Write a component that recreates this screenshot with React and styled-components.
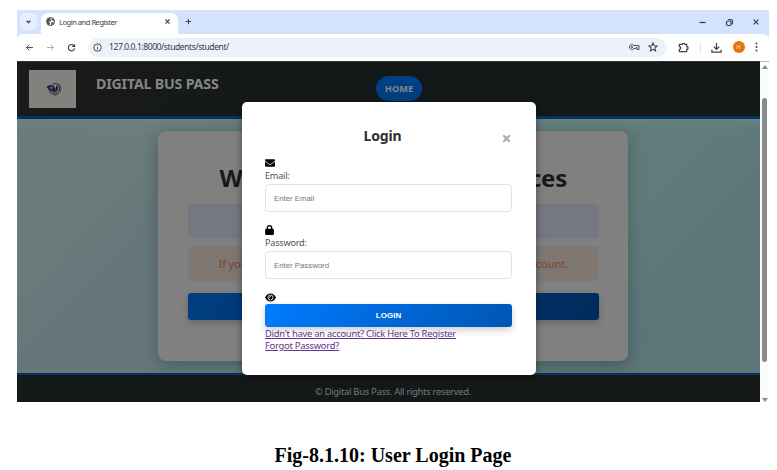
import React from "react";
import styled, { createGlobalStyle } from "styled-components";

const Global = createGlobalStyle`
  *{box-sizing:border-box}
  body{margin:0;background:#fff}
`;
const ui = `"Noto Sans","Open Sans",sans-serif`;

const Page = styled.main`
  width:777px;height:470px;padding:10px 8px 0 17px;background:#fff;font-family:${ui};overflow:hidden;
`;
const Browser = styled.section`
  width:752px;height:392px;display:flex;flex-direction:column;background:#fff;
`;
const TabStrip = styled.div`
  height:30px;flex:none;background:#d3e2fd;display:flex;align-items:flex-start;padding:3px 0 0 3px;
`;
const TabMenu = styled.div`
  width:17px;height:17px;border-radius:5px;background:#e7effd;display:grid;place-items:center;
`;
const Tab = styled.div`
  width:137px;height:27px;margin:0 0 0 4px;background:#fff;border-radius:7px 7px 0 0;
  display:flex;align-items:center;padding:0 7px 10px 5px;
`;
const TabTitle = styled.span`
  flex:1;margin-left:4px;font-size:7.5px;line-height:12px;color:#3b3d40;letter-spacing:-.46px;white-space:nowrap;
`;
const NewTab = styled.div`margin:5px 0 0 7px;height:9px;display:flex;`;
const WindowButtons = styled.div`
  margin:3px 9px 0 auto;display:flex;gap:18px;align-items:center;height:12px;
`;
const Toolbar = styled.div`
  height:27px;flex:none;margin-top:-6px;background:#fff;border-radius:6px 6px 0 0;display:flex;align-items:center;padding:0 11px 1px 8px;
`;
const Nav = styled.div`display:flex;gap:12px;width:63px;`;
const Address = styled.div`
  width:579px;height:19px;border-radius:10px;background:#edf2fa;display:flex;align-items:center;padding:0 9px 0 5px;
`;
const Url = styled.span`
  flex:1;margin-left:7px;font-size:8.6px;line-height:14px;color:#383a3d;letter-spacing:-.45px;white-space:nowrap;
`;
const AddressIcons = styled.div`display:flex;gap:8px;align-items:center;`;
const Actions = styled.div`margin-left:11px;display:flex;align-items:center;flex:1;justify-content:space-between;`;
const Divider = styled.i`width:1px;height:9px;background:#d3e0f8;`;
const Avatar = styled.span`
  width:12px;height:12px;border-radius:50%;background:#e8710a;color:#ffe3cb;display:grid;place-items:center;font:6px/1 Roboto,sans-serif;
`;
const Viewport = styled.div`
  height:341px;display:flex;position:relative;
`;
const Site = styled.div`width:743px;display:flex;flex-direction:column;`;
const Header = styled.header`
  height:58px;flex:none;display:flex;align-items:flex-start;padding-left:12px;
  background:linear-gradient(135deg,#1a1a1a,#131819 45%);border-top:1px solid #303334;border-bottom:3px solid #07325f;
`;
const Logo = styled.div`width:47px;height:38px;margin-top:8px;background:#82817d;display:grid;place-items:center;padding-left:3px;`;
const Brand = styled.h1`
  margin:12px 0 0 20px;width:280px;font-size:14.2px;line-height:20px;font-weight:700;color:#858687;letter-spacing:-.19px;white-space:nowrap;
`;
const Home = styled.a`
  width:46px;height:25px;margin-top:14px;border-radius:13px;background:#003f82;color:#80878f;
  display:grid;place-items:center;font-size:9.2px;font-weight:700;letter-spacing:.05px;
`;
const Main = styled.div`
  height:254px;padding-top:12px;display:flex;justify-content:center;align-items:flex-start;
  background:linear-gradient(#6b8e9255,transparent 14px),linear-gradient(135deg,#6c7b79 0,#6b7c7b 14%,#66777b 24%,#65777a 38%,#617a7a 55%,#617b7b 70%,#5c7579 84%,#5c7679 100%);
`;
const Card = styled.div`
  width:470px;height:230px;margin-left:9px;padding:31px 29px 0 29.5px;border-radius:8px;background:#808080;box-shadow:0 4px 16px rgba(0,25,25,.3);
`;
const Welcome = styled.h2`
  margin:0;height:42px;padding:0 32px;display:flex;justify-content:space-between;align-items:flex-start;
  color:#18191b;font-size:24px;line-height:32px;font-weight:700;letter-spacing:-.25px;
`;
const Notice = styled.div`
  height:${p => p.$warm ? 35 : 34}px;margin-bottom:${p => p.$warm ? 12 : 8}px;padding:0 31px;border-radius:4px;
  display:flex;justify-content:space-between;align-items:center;font-size:11.3px;letter-spacing:-.2px;
  background:${p => p.$warm ? "#7f7872" : "#757880"};color:#803f2c;
`;
const CardButton = styled.div`
  height:27px;border-radius:3px;background:linear-gradient(120deg,#003e80,#002b5c);box-shadow:0 3px 7px rgba(0,0,0,.2);
`;
const Footer = styled.footer`
  height:29px;border-top:2px solid #07325f;background:#141819;color:#77797a;
  display:flex;justify-content:center;align-items:center;padding:5px 0 0 9px;font-size:9.4px;letter-spacing:-.28px;
`;
const Scroll = styled.div`
  width:9px;background:#fbfbfb;border-top:1px solid #b8b8b8;display:flex;flex-direction:column;align-items:center;
`;
const Arrow = styled.i`
  border:3px solid transparent;border-bottom:4px solid #8c8c8c;border-top:0;margin:${p => p.$down ? "auto 0 0" : "3px 0 29px"};
  transform:${p => p.$down ? "rotate(180deg)" : "none"};
`;
const Thumb = styled.i`width:5px;height:264px;border-radius:3px;background:#8b8b8b;`;
const Modal = styled.section`
  position:absolute;left:225px;top:41px;width:294px;height:273px;padding:24px 24px 0 23px;
  background:#fff;border-radius:5px;box-shadow:0 2px 8px rgba(0,0,0,.4);display:flex;flex-direction:column;
`;
const ModalHead = styled.div`height:31px;display:grid;grid-template-columns:20px 1fr 20px;`;
const ModalTitle = styled.h2`
  grid-column:2;margin:0 0 0 -12px;text-align:center;font-size:14px;line-height:20px;font-weight:700;color:#2d2f32;letter-spacing:-.15px;
`;
const Close = styled.button`
  border:0;padding:7px 0 0 0;background:none;align-self:start;display:flex;justify-content:flex-end;
`;
const Field = styled.label`
  height:67.3px;flex:none;display:flex;flex-direction:column;color:#555;font-size:9.2px;line-height:13px;letter-spacing:-.27px;
`;
const FieldIcon = styled.span`height:12px;flex:none;display:flex;align-items:center;`;
const Input = styled.input`
  height:28px;width:247px;margin-top:2px;border:1px solid #e3e3e3;border-radius:4px;padding:0 8px;outline:0;
  font:7.8px "Liberation Sans",sans-serif;color:#444;&::placeholder{color:#777;opacity:1;}
`;
const Submit = styled.button`
  height:23px;flex:none;border:0;border-radius:3px;color:#fff;font:700 8px "Liberation Sans",sans-serif;
  background:linear-gradient(120deg,#007bff,#0056b3);box-shadow:0 3px 7px rgba(0,0,0,.2);
`;
const Links = styled.div`display:flex;flex-direction:column;align-items:flex-start;margin-top:1px;`;
const Link = styled.a`
  color:#623587;font-size:9.4px;line-height:12.5px;text-decoration:underline;text-underline-offset:1px;letter-spacing:-.25px;white-space:nowrap;
`;
const Caption = styled.h3`
  margin:41px 0 0 0;text-align:center;font:700 20px/24px "Liberation Serif",serif;color:#000;letter-spacing:0;
`;

const paths = {
  down: <path d="m7 10 5 5 5-5" />,
  x: <path d="m5 5 14 14M19 5 5 19" />,
  plus: <path d="M12 3v18M3 12h18" />,
  min: <path d="M4 12h16" />,
  restore: <><rect x="4" y="8" width="12" height="12" rx="4" /><path d="M8 5q1-1 4-1h3q5 0 5 5v3q0 3-2 5" /></>,
  back: <path d="M21 12H4m7-7-7 7 7 7" />,
  forward: <path d="M3 12h17m-7-7 7 7-7 7" />,
  reload: <path d="M19 7.5A8.5 8.5 0 1 0 20.5 14M20 3v6h-6" />,
  info: <><circle cx="12" cy="12" r="10" /><path d="M12 11v6M12 6v2" /></>,
  star: <path d="m12 2 3 7 7 .6-5.4 4.7 1.7 7.2L12 17.7l-6.3 3.8 1.7-7.2L2 9.6 9 9z" />,
  puzzle: <path d="M3 5h6q0-2 3-2t3 2h4v5q3 0 3 3t-3 3v5H3v-5q3 0 3-3t-3-3z" />,
  download: <path d="M12 2v14m-6-6 6 6 6-6M2 17v5h20v-5" />,
};
const Icon = ({ name, size = 9, color = "#3d4043", weight = 2.5 }) => (
  <svg width={size} height={size} viewBox="0 0 24 24" fill="none" stroke={color} strokeWidth={weight}>{paths[name]}</svg>
);
const Globe = () => (
  <svg width="9" height="9" viewBox="0 0 18 18"><circle cx="9" cy="9" r="8" fill="#fff" stroke="#505357" strokeWidth="2" /><path fill="#505357" d="M2 5Q5 1 10 1L8 4l3 2-2 3H5l3 3-1 5Q2 15 1 9zM12 2q5 2 5 7l-4-2-2-2zM11 10l5 1q-2 5-6 6z" /></svg>
);
const Key = () => (
  <svg width="11" height="8" viewBox="0 0 22 14" fill="none" stroke="#4b4e52" strokeWidth="2"><path d="M10 4A5 5 0 1 0 10 10h4V8h2v4h4V4z" /><circle cx="6" cy="7" r="1.500" /></svg>
);
const Emblem = () => (
  <svg width="16" height="15" viewBox="0 0 32 30" fill="none">
    <path d="M1 10Q6 4 14 7q4 2 6 8l-4 6-4-2q-6 1-8-6z" fill="#20243d" /><path d="M13 5q5-4 10-1 6 4 4 12-3 9-13 8-5-1-7-5" stroke="#20243d" strokeWidth="2" /><path d="M20 7v8q-2 4-6 5 8 2 10-5V8" fill="#20243d" /><path d="M25 3q5 4 5 10-1 12-14 14" stroke="#343951" strokeWidth="1.500" /><path d="m8 11 6-1-3 5z" fill="#77797e" />
  </svg>
);
const Envelope = () => (
  <svg width="10" height="10" viewBox="0 0 512 512"><path d="M48 64C21.500 64 0 85.500 0 112c0 15.100 7.100 29.300 19.200 38.400L236.800 313.600c11.400 8.500 27 8.500 38.400 0l217.600-163.200c12.100-9.100 19.200-23.300 19.200-38.400 0-26.500-21.500-48-48-48zM0 176v208c0 35.300 28.700 64 64 64h384c35.300 0 64-28.700 64-64V176L294.400 339.200c-22.800 17.100-54 17.100-76.800 0z" /></svg>
);
const Lock = () => (
  <svg width="9" height="10" viewBox="0 0 448 512"><path d="M144 144v48h160v-48a80 80 0 0 0-160 0zm-64 48v-48a144 144 0 0 1 288 0v48h16c35 0 64 29 64 64v192c0 35-29 64-64 64H64c-35 0-64-29-64-64V256c0-35 29-64 64-64z" /></svg>
);
const Eye = () => (
  <svg width="11" height="9" viewBox="0 0 22 18"><path d="M0 9Q4 1 11 1t11 8q-4 8-11 8T0 9z" /><circle cx="11" cy="9" r="5" fill="none" stroke="#fff" strokeWidth="1.700" /><path d="M8 9q3 0 3-3" stroke="#fff" strokeWidth="1.500" fill="none" /></svg>
);

export default function App() {
  return (
    <Page>
      <Global />
      <Browser>
        <TabStrip>
          <TabMenu><Icon name="down" weight={3.5} /></TabMenu>
          <Tab><Globe /><TabTitle>Login and Register</TabTitle><Icon name="x" size={7} weight={4} /></Tab>
          <NewTab><Icon name="plus" size={7} weight={3.5} /></NewTab>
          <WindowButtons><Icon name="min" size={9} weight={3.5} /><Icon name="restore" size={9} weight={3.2} /><Icon name="x" size={8} weight={3.5} /></WindowButtons>
        </TabStrip>
        <Toolbar>
          <Nav><Icon name="back" /><Icon name="forward" color="#a2a4a7" /><Icon name="reload" weight={3} /></Nav>
          <Address><Icon name="info" /><Url>127.0.0.1:8000/students/student/</Url><AddressIcons><Key /><Icon name="star" size={10} /></AddressIcons></Address>
          <Actions><Icon name="puzzle" size={11} weight={2.7} /><Divider /><Icon name="download" size={11} weight={2.7} /><Avatar>H</Avatar>
            <svg width="3" height="10" viewBox="0 0 3 10" fill="#45484b"><circle cx="1.500" cy="1.500" r="1" /><circle cx="1.500" cy="5" r="1" /><circle cx="1.500" cy="8.500" r="1" /></svg>
          </Actions>
        </Toolbar>
        <Viewport>
          <Site>
            <Header><Logo><Emblem /></Logo><Brand>DIGITAL BUS PASS</Brand><Home>HOME</Home></Header>
            <Main>
              <Card>
                <Welcome><span>W</span><span>ces</span></Welcome>
                <Notice />
                <Notice $warm><span>If you</span><span>account.</span></Notice>
                <CardButton />
              </Card>
            </Main>
            <Footer>© Digital Bus Pass. All rights reserved.</Footer>
          </Site>
          <Scroll><Arrow /><Thumb /><Arrow $down /></Scroll>
          <Modal>
            <ModalHead><ModalTitle>Login</ModalTitle><Close aria-label="Close"><Icon name="x" size={11} weight={4.5} color="#aaa" /></Close></ModalHead>
            <Field><FieldIcon><Envelope /></FieldIcon>Email:<Input placeholder="Enter Email" /></Field>
            <Field><FieldIcon><Lock /></FieldIcon>Password:<Input placeholder="Enter Password" /></Field>
            <FieldIcon><Eye /></FieldIcon>
            <Submit>LOGIN</Submit>
            <Links><Link>Didn't have an account? Click Here To Register</Link><Link>Forgot Password?</Link></Links>
          </Modal>
        </Viewport>
      </Browser>
      <Caption>Fig-8.1.10: User Login Page</Caption>
    </Page>
  );
}
